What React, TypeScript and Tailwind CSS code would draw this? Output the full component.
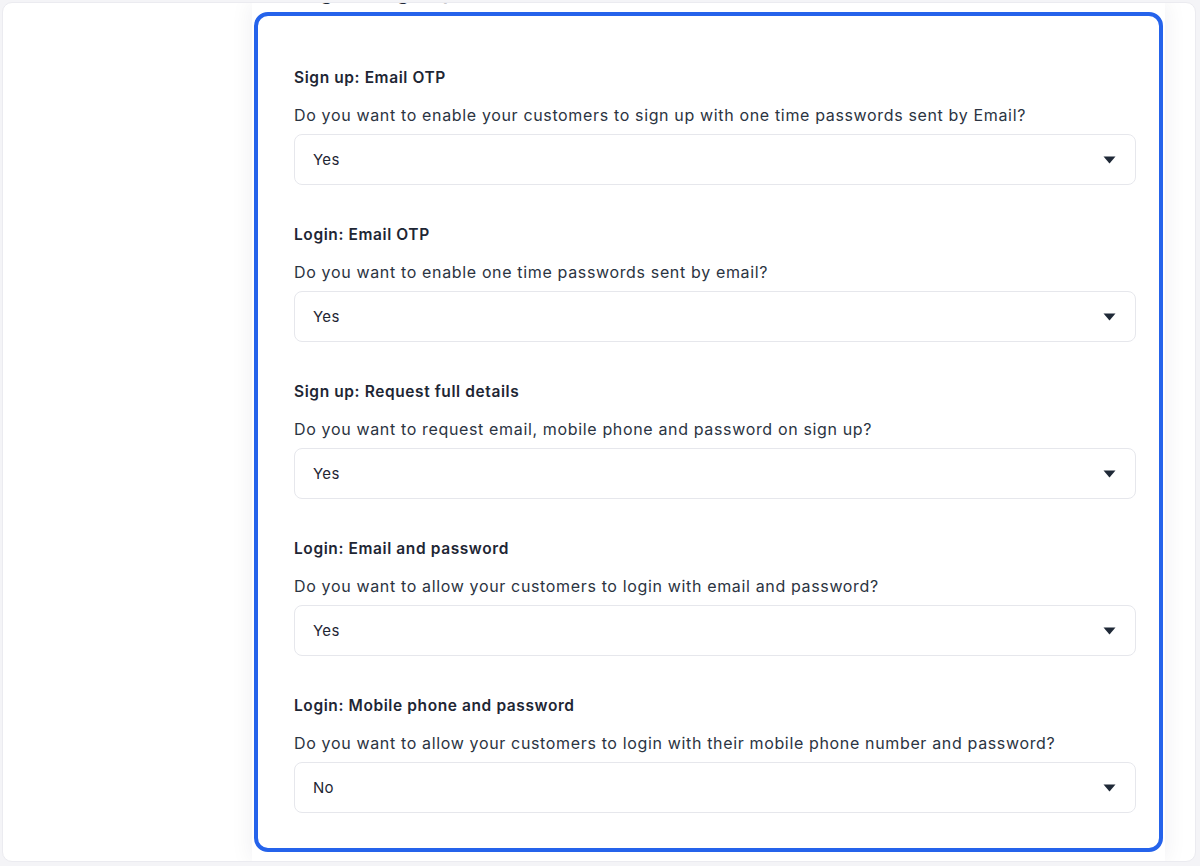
const sections = [
  {
    title: "Sign up: Email OTP",
    question: "Do you want to enable your customers to sign up with one time passwords sent by Email?",
    value: "Yes",
  },
  {
    title: "Login: Email OTP",
    question: "Do you want to enable one time passwords sent by email?",
    value: "Yes",
  },
  {
    title: "Sign up: Request full details",
    question: "Do you want to request email, mobile phone and password on sign up?",
    value: "Yes",
  },
  {
    title: "Login: Email and password",
    question: "Do you want to allow your customers to login with email and password?",
    value: "Yes",
  },
  {
    title: "Login: Mobile phone and password",
    question: "Do you want to allow your customers to login with their mobile phone number and password?",
    value: "No",
  },
];

function Caret() {
  return (
    <svg width="13" height="8" viewBox="0 0 13 8" className="text-[#1f2937]">
      <path d="M0.5 0.5h12L6.5 7.5z" fill="currentColor" />
    </svg>
  );
}

export default function App() {
  return (
    <div
      className="h-[866px] w-[1200px] overflow-hidden bg-[#f4f4f7] pt-[2px] pl-[2px] pr-[4px] pb-[4px]"
      style={{ fontFamily: "Inter, 'Open Sans', sans-serif" }}
    >
      <div className="flex h-full overflow-hidden rounded-[10px] border border-[#ebebf0] bg-white">
        <div className="w-[249px] shrink-0" />
        <div className="relative flex w-[913px] shrink-0 flex-col bg-white shadow-[0_0_22px_rgba(20,20,60,0.07)]">
          <h2 className="-mt-[23px] h-[32px] pl-[42px] text-[22px] font-semibold leading-[22px] text-[#1f2937]">
            Login &amp; sign up
          </h2>
          <div className="ml-[2px] h-[840px] w-[909px] rounded-[14px] border-4 border-[#2563eb] bg-white pt-[50px] pl-[36px] pr-[23px]">
            {sections.map((s) => (
              <div key={s.title} className="pb-[38px]">
                <p className="text-[15.5px] font-semibold leading-[24px] tracking-[0.6px] text-[#1e2634]">{s.title}</p>
                <p className="mt-[13px] text-[16px] leading-[24px] tracking-[0.65px] text-[#2b3442]">{s.question}</p>
                <div className="mt-[7px] flex h-[51px] items-center justify-between rounded-lg border border-[#e6e7ec] pl-[18px] pr-[19px]">
                  <span className="pt-px text-[15px] tracking-[0.3px] text-[#1e2634]">{s.value}</span>
                  <Caret />
                </div>
              </div>
            ))}
          </div>
        </div>
        <div className="flex-1" />
      </div>
    </div>
  );
}
